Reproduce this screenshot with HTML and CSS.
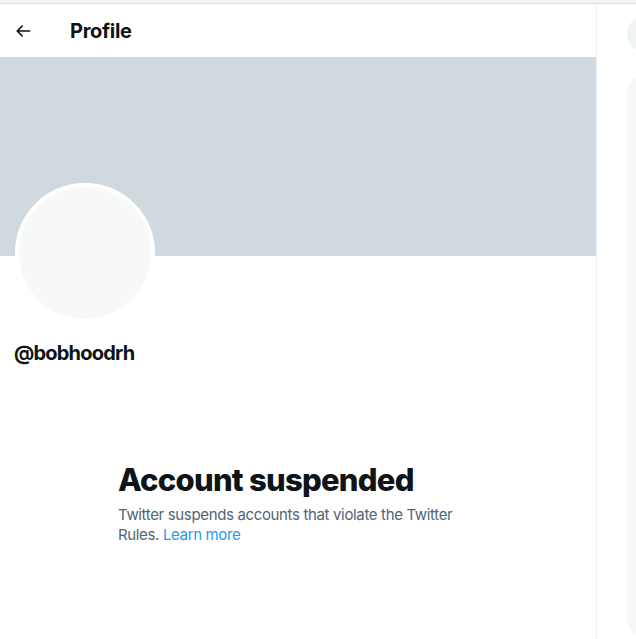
FILE: index.html
```html
<!DOCTYPE html>
<html lang="en">
<head>
<meta charset="utf-8">
<link rel="stylesheet" href="styles.css">
<title>Profile</title>
</head>
<body>
<div class="topbar"></div>
<div class="layout">
  <main class="primary">
    <header class="header">
      <a class="back" href="#" aria-label="Back">
        <svg viewBox="0 0 24 24" class="back-icon"><path d="M20 11H7.414l4.293-4.293c.39-.39.39-1.023 0-1.414s-1.023-.39-1.414 0l-6 6c-.39.39-.39 1.023 0 1.414l6 6c.195.195.45.293.707.293s.512-.098.707-.293c.39-.39.39-1.023 0-1.414L7.414 13H20c.553 0 1-.447 1-1s-.447-1-1-1z"/></svg>
      </a>
      <h2 class="title">Profile</h2>
    </header>
    <div class="banner"></div>
    <section class="profile">
      <div class="avatar"><div class="avatar-inner"></div></div>
      <div class="handle">@bobhoodrh</div>
    </section>
    <section class="empty">
      <h1 class="empty-title">Account suspended</h1>
      <p class="empty-text"><span>Twitter suspends accounts that violate the Twitter Rules.</span> <a href="#" class="link">Learn more</a></p>
    </section>
  </main>
  <aside class="sidebar">
    <div class="search"></div>
    <div class="card"></div>
  </aside>
</div>
</body>
</html>
```
FILE: styles.css
```css
* { box-sizing: border-box; }
html, body { margin: 0; padding: 0; background: #fff; }
body {
  font-family: Inter, "Liberation Sans", sans-serif;
  color: #0f1419;
  height: 639px;
  overflow: hidden;
}
.topbar {
  height: 4px;
  background: #f3f3f3;
  border-bottom: 1px solid #dedede;
}
.layout {
  display: flex;
  height: 635px;
  overflow: hidden;
}
.primary {
  width: 597px;
  flex: none;
  border-right: 1px solid #eff3f4;
}
.header {
  height: 53px;
  display: flex;
  align-items: center;
  padding: 0 13px;
}
.back {
  width: 20px;
  height: 20px;
  display: flex;
  margin-right: 37px;
  color: #0f1419;
}
.back-icon { width: 20px; height: 20px; fill: currentColor; }
.title {
  margin: 0;
  font-size: 20px;
  font-weight: 700;
  line-height: 24px;
  letter-spacing: -0.3px;
}
.banner {
  height: 199px;
  background: #cfd9de;
}
.profile {
  padding: 0 14px;
}
.avatar {
  width: 140px;
  height: 140px;
  margin-top: -73px;
  margin-left: 1px;
  border-radius: 50%;
  border: 4px solid #fff;
  background: #fff;
}
.avatar-inner {
  width: 100%;
  height: 100%;
  border-radius: 50%;
  background: #f7f9f9;
}
.handle {
  margin-top: 18px;
  font-size: 20px;
  font-weight: 700;
  line-height: 24px;
  letter-spacing: -0.8px;
}
.empty {
  max-width: 400px;
  margin: 65px auto 32px;
  padding: 32px 20px;
}
.empty-title {
  margin: 0 0 7px;
  font-size: 31px;
  font-weight: 800;
  line-height: 36px;
  letter-spacing: -0.75px;
}
.empty-text {
  margin: 0;
  font-size: 15px;
  line-height: 20px;
  color: #536471;
  letter-spacing: -0.35px;
}
.link { color: #1d9bf0; text-decoration: none; }
.sidebar {
  flex: 1;
  min-width: 0;
  overflow: hidden;
  padding-left: 30px;
  padding-top: 12px;
}
.search {
  height: 36px;
  border-radius: 18px;
  background: #eff3f4;
  width: 350px;
}
.card {
  margin-top: 24px;
  height: 560px;
  width: 350px;
  border-radius: 16px;
  background: #f7f9f9;
}
```
